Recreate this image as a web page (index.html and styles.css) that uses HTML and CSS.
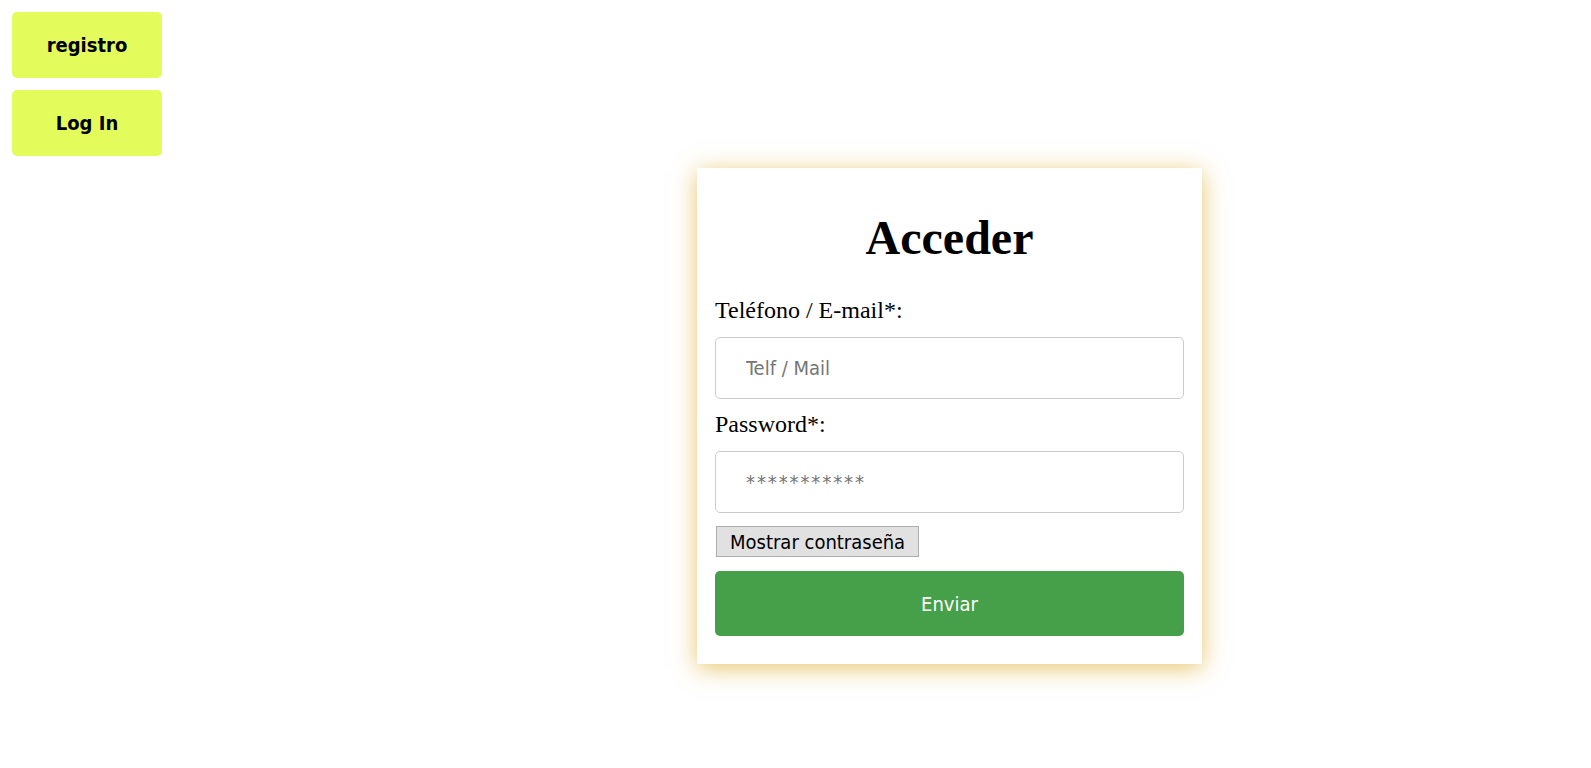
FILE: index.html
```html
<!DOCTYPE html>
<html lang="es">
<head>
<meta charset="utf-8">
<title>Acceder</title>
<link rel="stylesheet" href="styles.css">
</head>
<body>
<div class="page">
  <nav class="side">
    <button class="nav-btn" type="button">registro</button>
    <button class="nav-btn" type="button">Log In</button>
  </nav>
  <main class="main">
    <form class="card">
      <h1 class="title">Acceder</h1>
      <label class="label" for="user">Teléfono / E-mail*:</label>
      <input class="field" id="user" type="text" placeholder="Telf / Mail">
      <label class="label" for="pass">Password*:</label>
      <input class="field field-pass" id="pass" type="password" placeholder="***********">
      <div class="show-row"><button class="show-btn" type="button">Mostrar contraseña</button></div>
      <button class="submit" type="button">Enviar</button>
    </form>
  </main>
</div>
</body>
</html>
```

FILE: styles.css
```css
html, body {
  margin: 0;
  padding: 0;
  background: #ffffff;
}

.page {
  display: grid;
  grid-template-columns: 308px 1fr;
  width: 1591px;
  min-height: 768px;
}

.side {
  display: flex;
  flex-direction: column;
  align-items: flex-start;
  gap: 12px;
  padding: 12px;
}

.nav-btn {
  width: 150px;
  height: 66px;
  border: none;
  border-radius: 5px;
  background: #e3fb5b;
  color: #000;
  font-family: "DejaVu Sans Condensed", "DejaVu Sans", sans-serif;
  font-stretch: condensed;
  font-weight: bold;
  font-size: 20px;
  padding: 0;
}

.main {
  display: flex;
  justify-content: center;
  align-items: flex-start;
  padding-top: 168px;
}

.card {
  box-sizing: border-box;
  width: 505px;
  background: #fff;
  padding: 18px 18px 28px;
  display: flex;
  flex-direction: column;
  box-shadow: 0 4px 22px rgba(222, 168, 34, 0.66);
}

.title {
  margin: 24px 0 32px;
  font-family: "Liberation Serif", serif;
  font-weight: bold;
  font-size: 48px;
  line-height: 55px;
  text-align: center;
}

.label {
  font-family: "Liberation Serif", serif;
  font-size: 24px;
  line-height: 27px;
  color: #000;
  margin-bottom: 13px;
}

.field {
  box-sizing: border-box;
  width: 100%;
  height: 62px;
  border: 1px solid #cccccc;
  border-radius: 5px;
  padding: 0 30px;
  margin: 0 0 12px;
  font-family: "DejaVu Sans Condensed", "DejaVu Sans", sans-serif;
  font-stretch: condensed;
  font-size: 20px;
  color: #000;
  outline: none;
}

.field::placeholder {
  color: #757575;
}

.field-pass::placeholder {
  letter-spacing: 1.9px;
}

.show-row {
  display: flex;
  margin: 1px 0 14px 1px;
}

.show-btn {
  box-sizing: border-box;
  height: 31px;
  padding: 0 13px;
  background: #e1e1e1;
  border: 1px solid #adadad;
  border-radius: 0;
  font-family: "DejaVu Sans Condensed", "DejaVu Sans", sans-serif;
  font-stretch: condensed;
  font-size: 20px;
  color: #000;
}

.submit {
  height: 65px;
  border: none;
  border-radius: 5px;
  background: #46a049;
  color: #fff;
  font-family: "DejaVu Sans Condensed", "DejaVu Sans", sans-serif;
  font-stretch: condensed;
  font-size: 20px;
  padding: 0;
}
```
